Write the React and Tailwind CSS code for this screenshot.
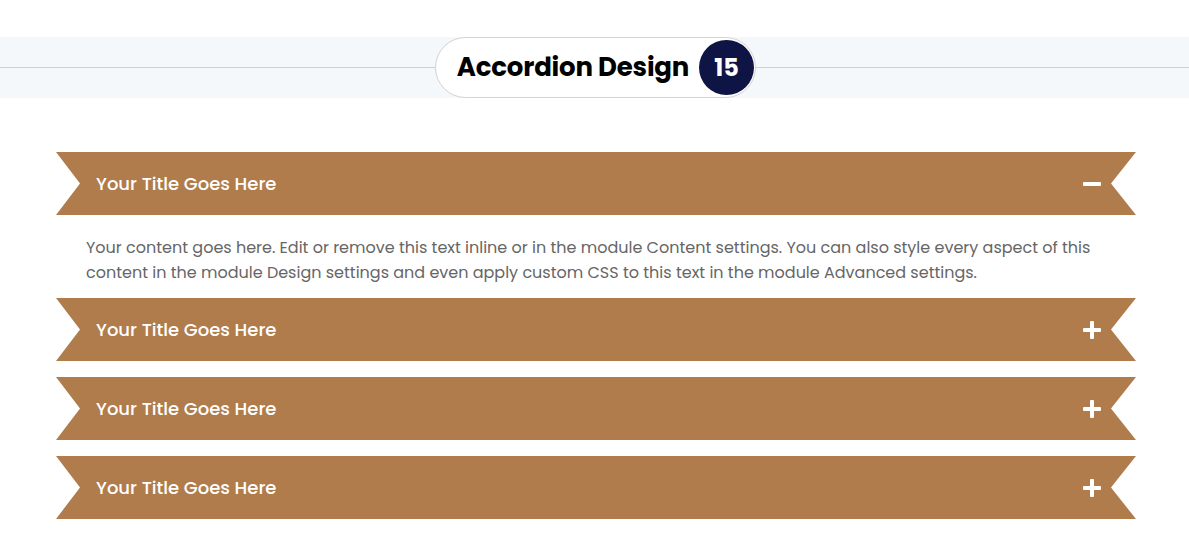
import { useState } from "react";

const items = [
  "Your Title Goes Here",
  "Your Title Goes Here",
  "Your Title Goes Here",
  "Your Title Goes Here",
];

const ToggleIcon = ({ open }) => (
  <span className="relative w-[18px] h-[18px] shrink-0">
    <span className="absolute left-0 top-[7px] w-[18px] h-[4px] bg-white rounded-[1px]" />
    {!open && (
      <span className="absolute top-0 left-[7px] w-[4px] h-[18px] bg-white rounded-[1px]" />
    )}
  </span>
);

export default function App() {
  const [openIndex, setOpenIndex] = useState(0);

  return (
    <div className="w-full min-h-[550px] bg-white font-['Poppins','Inter',sans-serif]">
      {/* header band */}
      <div className="pt-[37px]">
        <div className="relative h-[61px] bg-[#f4f8fb] flex items-center justify-center">
          <div className="absolute left-0 right-0 top-[30px] h-px bg-[#cdd0d4]" />
          <div className="relative flex items-center h-[61px] pl-[21px] pr-[1px] bg-white border border-[#d3d3d3] rounded-full ml-[2px]">
            <h2 className="text-[26px] font-bold tracking-[-0.2px] text-black mr-[10px]">
              Accordion Design
            </h2>
            <span className="w-[55px] h-[55px] rounded-full bg-[#0e1545] text-white text-[24px] font-bold flex items-center justify-center">
              15
            </span>
          </div>
        </div>
      </div>

      {/* accordion */}
      <div className="w-[1080px] ml-[56px] mt-[54px] flex flex-col">
        {items.map((title, i) => {
          const open = openIndex === i;
          return (
            <div key={i} className={i > 0 && openIndex !== i - 1 ? "mt-[16px]" : ""}>
              <button
                className="w-full h-[63px] bg-[#b07c4c] flex items-center justify-between pl-[40px] pr-[35px] text-left [clip-path:polygon(0_0,100%_0,calc(100%-25px)_50%,100%_100%,0_100%,24px_50%)]"
                onClick={() => setOpenIndex(open ? -1 : i)}
              >
                <span className="text-white text-[18px] font-medium">{title}</span>
                <ToggleIcon open={open} />
              </button>
              {open && (
                <p className="px-[30px] pt-[20px] pb-[13px] text-[16px] leading-[25px] text-[#666666]">
                  Your content goes here. Edit or remove this text inline or in the module Content
                  settings. You can also style every aspect of this content in the module Design
                  settings and even apply custom CSS to this text in the module Advanced settings.
                </p>
              )}
            </div>
          );
        })}
      </div>
    </div>
  );
}
